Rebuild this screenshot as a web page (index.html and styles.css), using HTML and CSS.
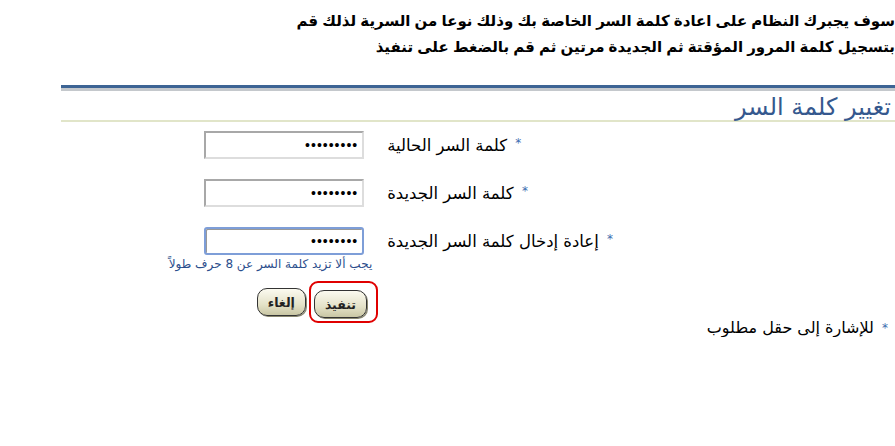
FILE: index.html
```html
<!DOCTYPE html>
<html lang="ar" dir="rtl">
<head>
<meta charset="UTF-8">
<title>تغيير كلمة السر</title>
<link rel="stylesheet" href="styles.css">
</head>
<body>

<div class="intro">
    <p>سوف يجبرك النظام على اعادة كلمة السر الخاصة بك وذلك نوعا من السرية لذلك قم</p>
    <p>بتسجيل كلمة المرور المؤقتة ثم الجديدة مرتين ثم قم بالضغط على تنفيذ</p>
</div>

<div class="page">
    <div class="linea-divisoria"></div>
    <h1 class="titulo">تغيير كلمة السر</h1>

    <table class="form-table">
        <tr>
            <td class="label"><span class="req">*</span> كلمة السر الحالية</td>
            <td class="field"><input type="password" value="123456789"></td>
        </tr>
        <tr>
            <td class="label"><span class="req">*</span> كلمة السر الجديدة</td>
            <td class="field"><input type="password" value="12345678"></td>
        </tr>
        <tr>
            <td class="label"><span class="req">*</span> إعادة إدخال كلمة السر الجديدة</td>
            <td class="field">
                <input type="password" class="focused" value="12345678">
                <div class="hint">يجب ألا تزيد كلمة السر عن 8 حرف طولاً</div>
            </td>
        </tr>
    </table>

    <div class="acciones">
        <span class="marca"><button class="btn">تنفيذ</button></span>
        <button class="btn">إلغاء</button>
    </div>

    <p class="nota"><span class="req">*</span> للإشارة إلى حقل مطلوب</p>
</div>

</body>
</html>
```

FILE: styles.css
```css
body {
    font-family: "DejaVu Sans", "Liberation Sans", sans-serif;
    background-color: #fff;
    color: #000;
    margin: 0;
    padding: 0;
}
.intro {
    padding: 8px 0 0 0;
    font-family: "Liberation Sans", "DejaVu Sans", sans-serif;
    font-weight: bold;
    font-size: 15px;
}
.intro p {
    margin: 0;
    line-height: 26px;
}
.page {
    margin: 25px 0 0 61px;
}
.linea-divisoria {
    height: 3px;
    background-color: #3d6494;
    border-bottom: 3px solid #c4c8cc;
}
.titulo {
    margin: 0;
    padding: 4px 4px 0 0;
    font-size: 24px;
    font-weight: normal;
    color: #35588e;
    line-height: 25px;
    border-bottom: 2px solid #e1e5c9;
}
.form-table {
    border-collapse: collapse;
    margin: 9px 282px 0 0;
}
.form-table tr {
    height: 48px;
}
.form-table td {
    padding: 0;
    vertical-align: top;
}
.label {
    font-size: 16.5px;
    text-align: left;
    padding-top: 5px !important;
    padding-left: 23px !important;
    white-space: nowrap;
}
.req {
    color: #3d6cb0;
    font-size: 12px;
    vertical-align: top;
    margin-left: 3px;
}
.field input {
    width: 148px;
    height: 20px;
    padding: 2px 4px;
    border: 2px solid #a8a8a8;
    border-right-color: #ddd;
    border-bottom-color: #ddd;
    font-size: 14px;
    letter-spacing: 1px;
    direction: rtl;
}
.field input.focused {
    border: 2px solid #7e9ed8;
    border-radius: 3px;
    box-shadow: inset 1px 1px 0 #999;
}
.hint {
    font-size: 12px;
    color: #2b4e8c;
    margin-right: -8px;
    margin-top: 2px;
    white-space: nowrap;
}
.acciones {
    display: flex;
    align-items: center;
    margin: 6px 517px 0 0;
    gap: 3px;
}
.marca {
    border: 2px solid #e00000;
    border-radius: 9px;
    padding: 7px 9px 3px 3px;
}
.btn {
    font-family: "DejaVu Sans", sans-serif;
    font-size: 12.5px;
    font-weight: bold;
    color: #222;
    height: 28px;
    padding: 0 10px;
    background: linear-gradient(#fbfaf0, #e4e2c8 60%, #c9c6a4);
    border: 1px solid #333;
    border-radius: 10px;
    box-shadow: 1px 1px 0 #8a8870;
}
.btn:hover {
    background: #eeecd8;
}
.nota {
    font-size: 16px;
    line-height: 18px;
    margin: -4px 7px 0 0;
}
```
